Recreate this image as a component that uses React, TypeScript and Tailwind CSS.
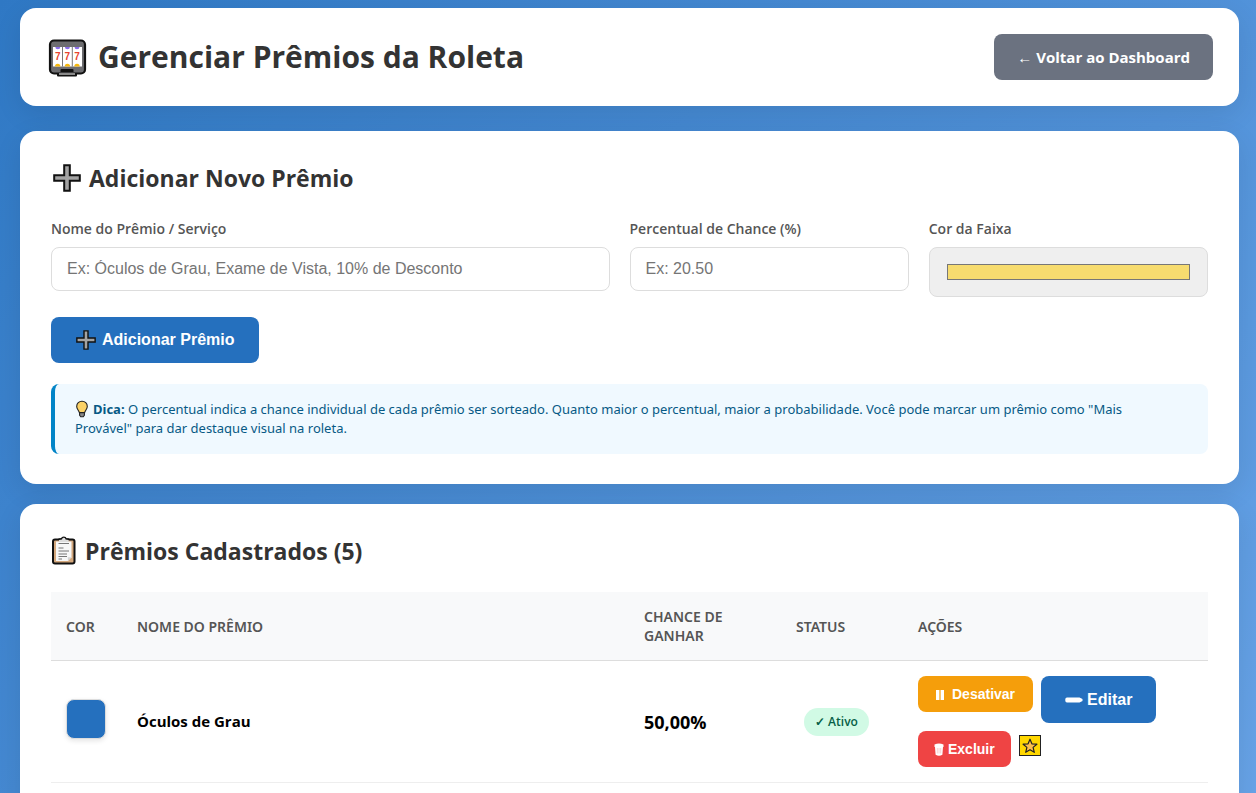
import type { ReactNode } from "react";

const card = "rounded-2xl bg-white shadow-[0_8px_28px_rgba(0,0,0,0.09)]";
const label = "mb-2 block text-sm leading-5 font-semibold text-[#555]";
const field =
  "block w-full rounded-lg border border-[#ddd] px-[15px] py-3 text-base leading-[18px] text-[#333] placeholder:text-[#757575] font-['Liberation_Sans',Arial,sans-serif]";
const button =
  "inline-flex items-center font-bold text-white font-['Liberation_Sans',Arial,sans-serif]";

const columns = [
  { name: "Cor", width: "w-[71px]" },
  { name: "Nome do Prêmio", width: "" },
  { name: "Chance de Ganhar", width: "w-[152px]" },
  { name: "Status", width: "w-[122px]" },
  { name: "Ações", width: "w-[305px]" },
];

const prizes = [{ id: 1, color: "#2570be", name: "Óculos de Grau", chance: "50,00%" }];

function SlotIcon() {
  return (
    <svg viewBox="0 -2 40 40" className="h-10 w-10 shrink-0" aria-hidden="true">
      <rect x="9" y="31" width="20" height="6.5" rx="1" fill="#111" />
      <rect x="2" y="1.5" width="35" height="33" rx="4" fill="#6d6d70" stroke="#111" strokeWidth="2.2" />
      <rect x="5" y="8" width="29" height="19.5" fill="#fff" />
      <path d="M14.5 8v19.5M24.3 8v19.5" stroke="#777" strokeWidth="1" />
      <path d="M7.3 8h5a2.5 2.3 0 0 1-5 0zM16.9 8h5a2.5 2.3 0 0 1-5 0zM26.5 8h5a2.5 2.3 0 0 1-5 0z" fill="#8b6ce8" />
      <path d="M7 27.5h5.4a2.7 2.7 0 0 0-5.4 0zM16.7 27.5h5.4a2.7 2.7 0 0 0-5.4 0zM26.3 27.5h5.4a2.7 2.7 0 0 0-5.4 0z" fill="#f5b80e" />
      <g fill="#e8442e" fontSize="10" fontWeight="700" textAnchor="middle" fontFamily="Liberation Sans, sans-serif">
        <text x="9.8" y="21">7</text>
        <text x="19.4" y="21">7</text>
        <text x="29" y="21">7</text>
      </g>
      <path d="M12.5 33v-2a1 1 0 0 1 1-1h11a1 1 0 0 1 1 1v2z" fill="#111" />
      <path d="M11 35h16" stroke="#ddd" strokeWidth="1.2" />
    </svg>
  );
}

function PlusIcon({ className }: { className: string }) {
  return (
    <svg viewBox="0 0 28 28" className={className} aria-hidden="true">
      <path d="M11.2 1.2h5.6v10h10v5.6h-10v10h-5.6v-10h-10v-5.6h10z" fill="#a3a3a3" stroke="#111" strokeWidth="2" />
    </svg>
  );
}

function BulbIcon() {
  return (
    <svg viewBox="0 0 14 18" className="mr-1 inline-block h-[18px] w-3.5 align-[-4px]" aria-hidden="true">
      <path d="M7 1.2a5.2 5.2 0 0 0-5.3 5.2c0 2.6 2 3.7 2.7 6.2h5.2c.7-2.5 2.7-3.6 2.7-6.2A5.2 5.2 0 0 0 7 1.2z" fill="#fcd266" stroke="#222" strokeWidth="1.1" />
      <path d="M4.6 12.6h4.8v2.6L8.3 16.8H5.7l-1.1-1.6z" fill="#888" stroke="#222" strokeWidth="1.1" />
    </svg>
  );
}

function ClipboardIcon() {
  return (
    <svg viewBox="0 0 26 30" className="h-[30px] w-[26px] shrink-0" aria-hidden="true">
      <rect x="2" y="3.5" width="21.5" height="24" rx="2" fill="#d3a77c" stroke="#111" strokeWidth="2" />
      <path d="M5 5.5h15.5v15.8l-3.6 3.7H5z" fill="#f7f7f7" />
      <path d="M20.5 21.3l-3.6 3.7v-3.7z" fill="#d5d5d5" />
      <path d="M8 3.5L10.5 3a2.4 2.4 0 0 1 4.6 0l2.5.5V6H8z" fill="#ddd" />
      <path d="M7.5 3.2l3-.4a2.4 2.4 0 0 1 4.6 0l3 .4" fill="none" stroke="#111" strokeWidth="1.4" />
      <path d="M7.5 7.5h10.5M7.5 12h5M7.5 15h10.5M7.5 18h8.5M7.5 20.5h8.5M7.5 23h3.5" stroke="#777" strokeWidth="1" />
    </svg>
  );
}

function PauseIcon() {
  return (
    <svg viewBox="0 0 8 10" className="mt-0.5 h-2.5 w-2" aria-hidden="true">
      <path d="M0 0h3.4v10H0zM4.6 0H8v10H4.6z" fill="#fff" />
    </svg>
  );
}

function PencilIcon() {
  return (
    <svg viewBox="0 0 18 6" className="h-1.5 w-[18px]" aria-hidden="true">
      <path d="M2 .5h12.5L17.5 2v2l-3 1.500H2A1.7 1.7 0 0 1 .3 3.800V2.200A1.700 1.700 0 0 1 2 .5z" fill="#fff" />
    </svg>
  );
}

function TrashIcon() {
  return (
    <svg viewBox="0 0 10 13" className="h-[13px] w-2.5" aria-hidden="true">
      <path d="M.5 1.5Q5-.7 9.5 1.5V4H9l-.6 7.7Q5 13.8 1.6 11.7L1 4H.5z" fill="#fff" />
      <path d="M3.3 5v5.5M5 5v5.5M6.700 5v5.500" stroke="#f9b4b4" strokeWidth=".6" />
    </svg>
  );
}

function StarIcon() {
  return (
    <svg viewBox="0 0 16 16" className="h-4 w-4" aria-hidden="true">
      <path d="M8 1.2l1.9 4.6 5 .4-3.8 3.2 1.2 4.9L8 11.7l-4.3 2.6 1.2-4.9L1.1 6.2l5-.4z" fill="#fbbf4d" stroke="#222" strokeWidth="1.2" strokeLinejoin="round" />
    </svg>
  );
}

function SectionTitle({ icon, children }: { icon: ReactNode; children: ReactNode }) {
  return (
    <h2 className="mb-6 flex items-center gap-2 text-[23px] leading-[34px] font-bold text-[#333]">
      {icon}
      {children}
    </h2>
  );
}

export default function App() {
  return (
    <div className="min-h-screen bg-[linear-gradient(135deg,#2f78c4_0%,#68a4e8_100%)] pt-2 pr-[17px] pb-5 pl-5 text-black font-['Open_Sans','Noto_Sans',sans-serif]">
      <header className={`${card} mb-[25px] flex items-center justify-between py-[26px] pr-[26px] pl-7`}>
        <h1 className="flex items-center gap-2.5 text-[30px] leading-[46px] font-bold text-[#333]">
          <SlotIcon />
          Gerenciar Prêmios da Roleta
        </h1>
        <a href="#dashboard" className="rounded-lg bg-[#6b7280] px-[23px] py-3 text-[15px] leading-[22px] font-bold text-white">
          ← Voltar ao Dashboard
        </a>
      </header>

      <section className={`${card} mb-5 px-[31px] py-[30px]`}>
        <SectionTitle icon={<PlusIcon className="ml-0.5 h-7 w-7 shrink-0" />}>Adicionar Novo Prêmio</SectionTitle>
        <form onSubmit={(e) => e.preventDefault()}>
          <div className="mb-5 grid grid-cols-[2fr_1fr_1fr] gap-5">
            <div>
              <label htmlFor="nome" className={label}>Nome do Prêmio / Serviço</label>
              <input id="nome" type="text" placeholder="Ex: Óculos de Grau, Exame de Vista, 10% de Desconto" className={field} />
            </div>
            <div>
              <label htmlFor="chance" className={label}>Percentual de Chance (%)</label>
              <input id="chance" type="number" step="0.01" placeholder="Ex: 20.50" className={field} />
            </div>
            <div>
              <label htmlFor="cor" className={label}>Cor da Faixa</label>
              <input id="cor" type="color" defaultValue="#f7dc6f" className="block h-[50px] w-full rounded-lg border border-[#ddd] bg-[#efefef] px-[15px] py-3" />
            </div>
          </div>
          <button type="submit" className={`${button} gap-1.5 rounded-lg bg-[#2570be] px-[25px] py-[13px] text-base leading-5`}>
            <PlusIcon className="h-5 w-5" />
            Adicionar Prêmio
          </button>
        </form>

        <p className="mt-[21px] rounded-lg border-l-4 border-[#0284c7] bg-[#f0f9ff] py-4 pr-[50px] pl-5 text-[13px] leading-[19px] text-[#075985] font-['Noto_Sans',sans-serif]">
          <BulbIcon />
          <strong>Dica:</strong> O percentual indica a chance individual de cada prêmio ser sorteado. Quanto maior o
          percentual, maior a probabilidade. Você pode marcar um prêmio como "Mais Provável" para dar destaque visual na
          roleta.
        </p>
      </section>

      <section className={`${card} px-[31px] py-[30px]`}>
        <SectionTitle icon={<ClipboardIcon />}>Prêmios Cadastrados (5)</SectionTitle>
        <table className="w-full table-fixed border-collapse text-left">
          <thead>
            <tr className="border-b border-[#ddd] bg-[#f8f9fa]">
              {columns.map((c) => (
                <th key={c.name} scope="col" className={`${c.width} px-[15px] py-[15px] text-sm leading-[19px] font-semibold text-[#555] uppercase font-['Noto_Sans',sans-serif]`}>
                  {c.name}
                </th>
              ))}
            </tr>
          </thead>
          <tbody>
            {prizes.map((p) => (
              <tr key={p.id} className="border-b border-[#eee]">
                <td className="px-[15px] py-[15px]">
                  <span className="inline-block h-10 w-10 rounded-lg border border-[#ddd] shadow-[0_2px_5px_rgba(0,0,0,0.1)]" style={{ backgroundColor: p.color }} />
                </td>
                <td className="px-[15px] py-[15px] text-[15px] font-bold">{p.name}</td>
                <td className="px-[15px] py-[15px] text-lg font-bold">{p.chance}</td>
                <td className="px-[15px] py-[15px]">
                  <span className="ml-2 inline-block rounded-full bg-[#d1fae5] px-[11px] py-1 text-xs leading-5 font-semibold text-[#065f46]">
                    ✓ Ativo
                  </span>
                </td>
                <td className="px-[15px] py-[15px]">
                  <div className="flex flex-wrap items-start gap-2">
                    <button type="button" className={`${button} gap-2 rounded-lg bg-[#f59e0b] px-[18px] py-[9px] text-sm leading-[18px]`}>
                      <PauseIcon />
                      Desativar
                    </button>
                    <button type="button" className={`${button} gap-1 rounded-lg bg-[#2570be] px-6 py-3.5 text-base leading-[19px]`}>
                      <PencilIcon />
                      Editar
                    </button>
                    <button type="button" className={`${button} gap-1 rounded-lg bg-[#ef4444] px-4 py-[9px] text-sm leading-[18px]`}>
                      <TrashIcon />
                      Excluir
                    </button>
                    <div className="pt-1">
                      <button type="button" aria-label="Mais provável" className="flex h-[21px] w-[22px] items-center justify-center border border-[#222] bg-[#ffd700]">
                        <StarIcon />
                      </button>
                    </div>
                  </div>
                </td>
              </tr>
            ))}
          </tbody>
        </table>
      </section>
    </div>
  );
}
